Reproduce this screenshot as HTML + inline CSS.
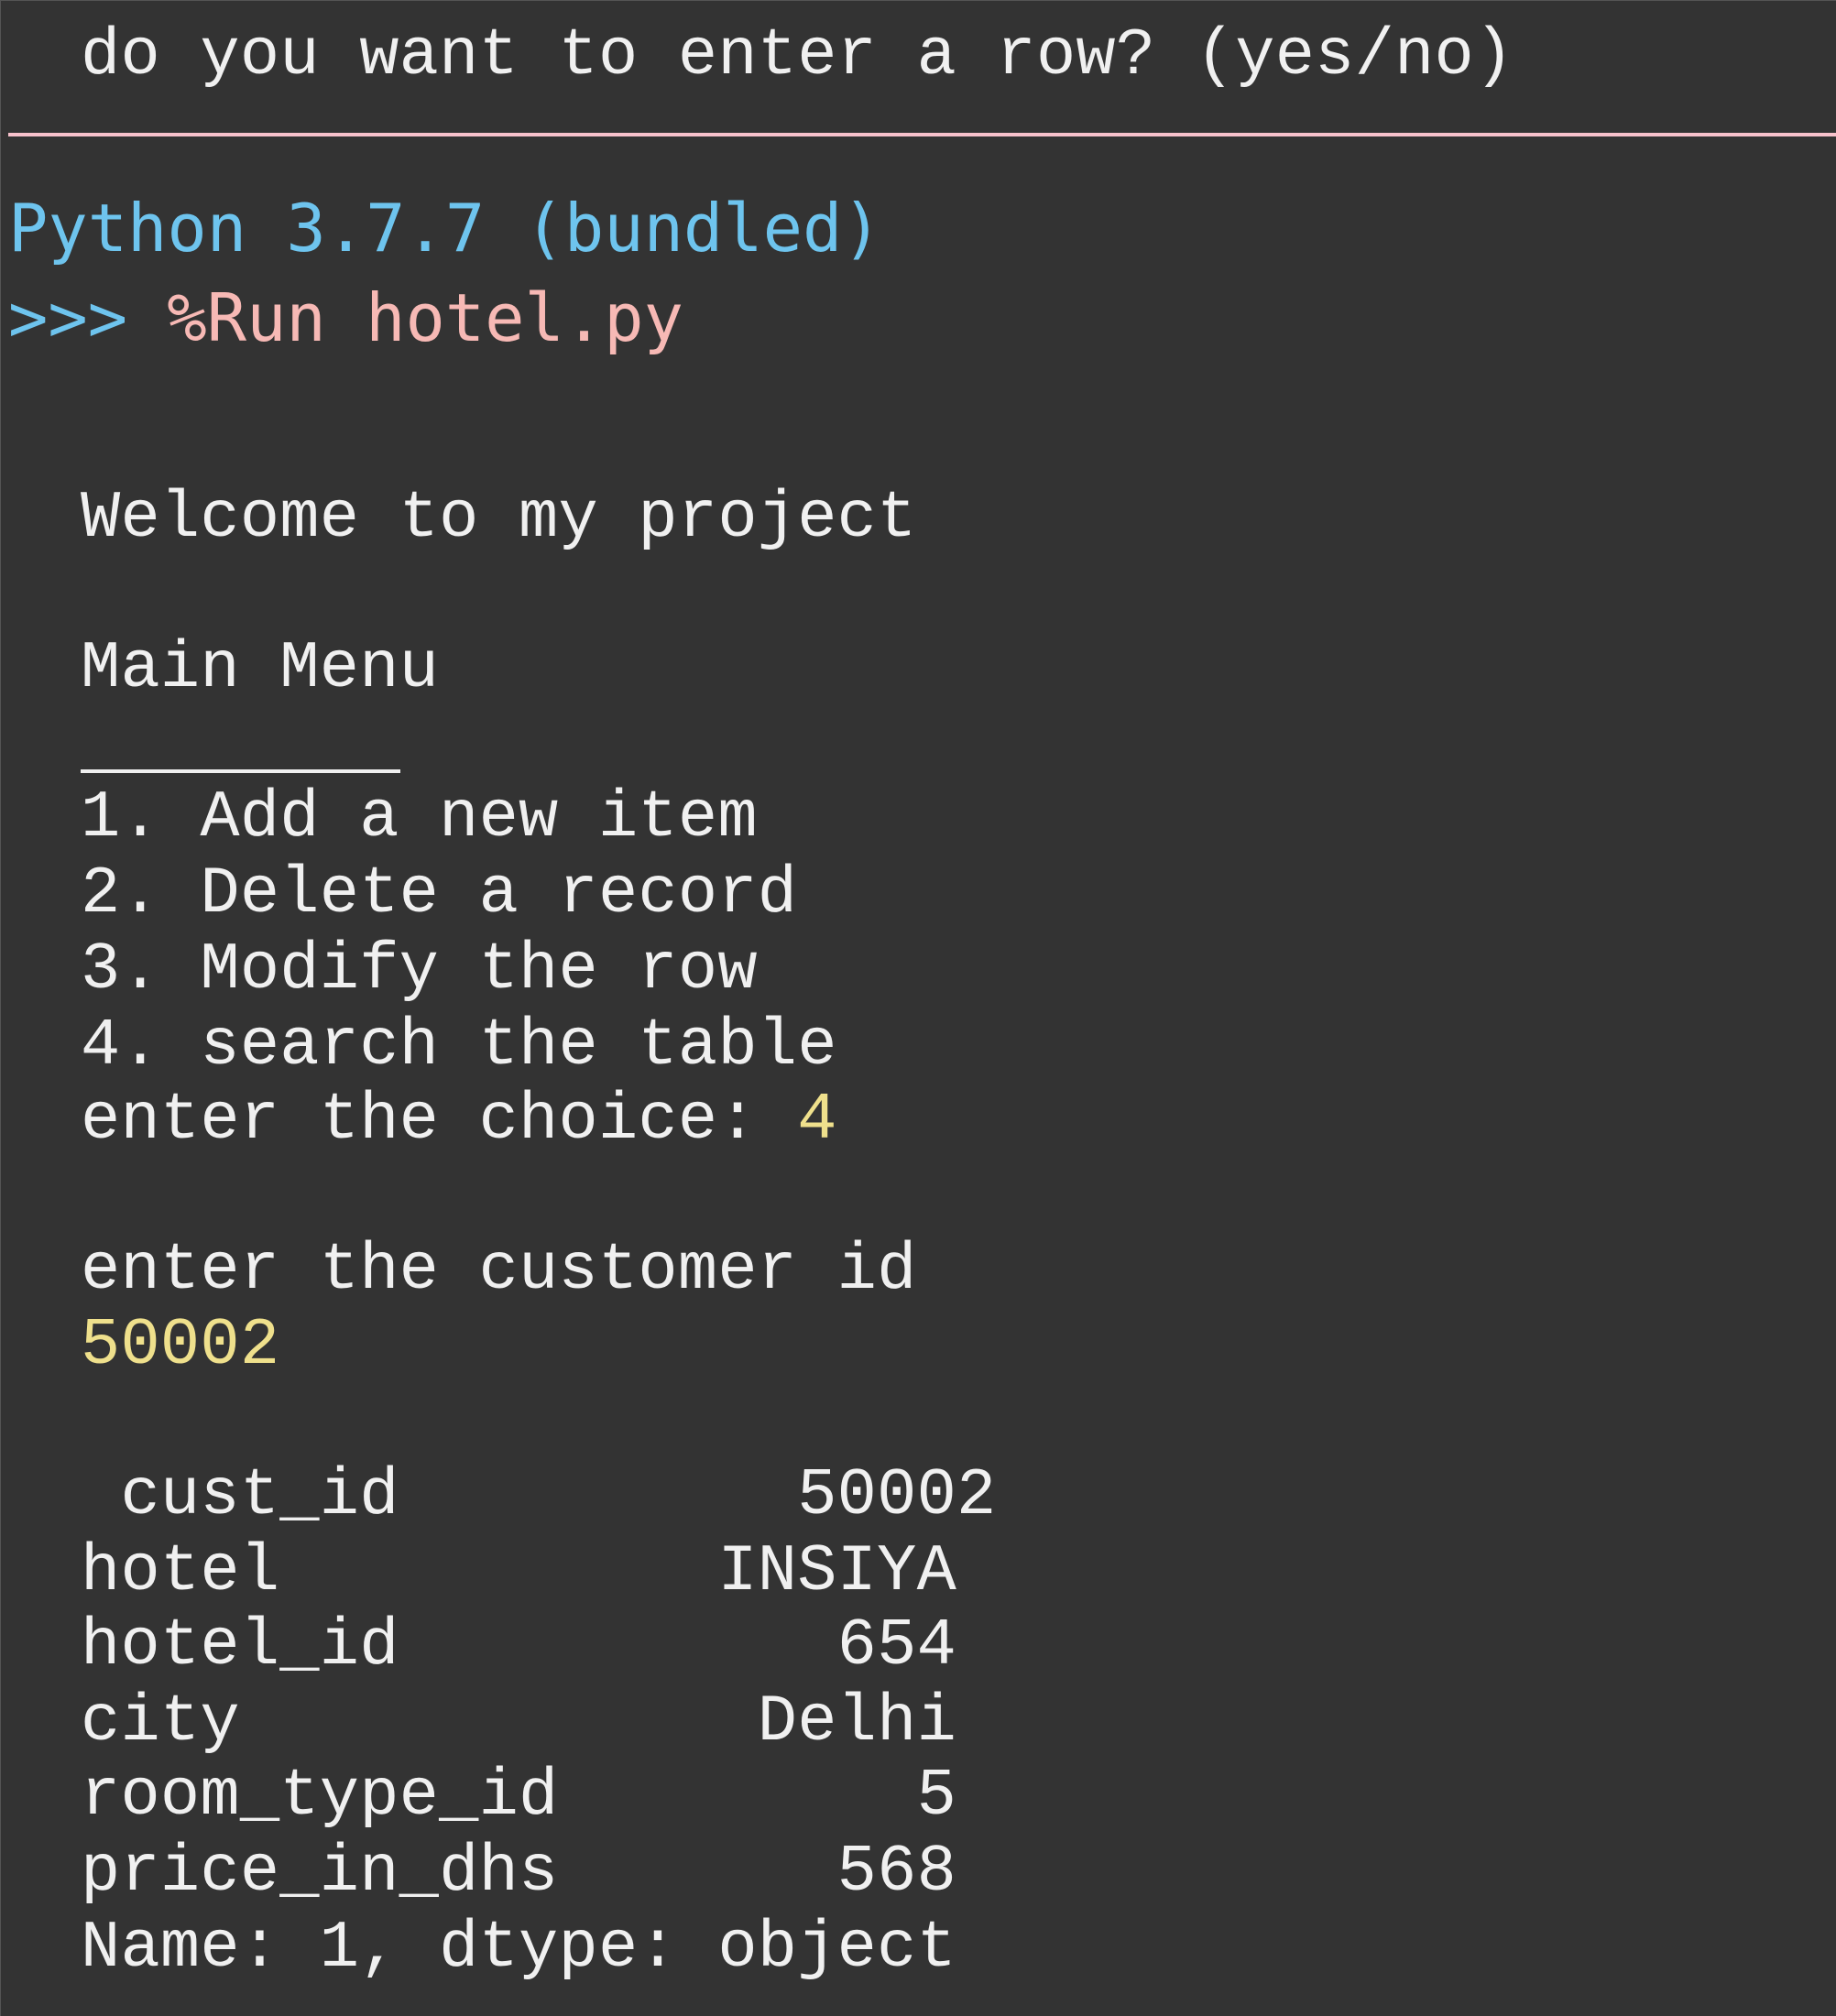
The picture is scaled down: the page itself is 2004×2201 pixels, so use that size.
<!DOCTYPE html>
<html><head><meta charset="utf-8"><style>
html,body{margin:0;padding:0;background:#333333;}
body{width:2004px;height:2201px;position:relative;overflow:hidden;border-left:1px solid #555;border-top:1px solid #555;box-sizing:border-box;}
.l{position:absolute;left:87px;white-space:pre;font-family:"Liberation Mono",monospace;font-size:72px;letter-spacing:0.25px;line-height:82px;height:82px;color:#f0f0f0;}
.p{left:8px;font-family:"DejaVu Sans Mono","Liberation Mono",monospace;color:#6ec4ee;letter-spacing:0;}
.pk{color:#f7b9b5;}
.y{color:#efe08c;}
.hr{position:absolute;left:8px;right:0;top:144px;height:4px;background:#f8c2cc;}
.ul{position:absolute;left:87px;width:349px;top:839px;height:4px;background:#f0f0f0;}
</style></head><body>
<div class="l" style="top:19px">do you want to enter a row? (yes/no)</div>
<div class="hr"></div>
<div class="l p" style="top:207px">Python 3.7.7 (bundled)</div>
<div class="l p" style="top:305px">&gt;&gt;&gt; <span class="pk">%Run hotel.py</span></div>
<div class="l" style="top:524px">Welcome to my project</div>
<div class="l" style="top:688px">Main Menu</div>
<div class="ul"></div>
<div class="l" style="top:851px">1. Add a new item</div>
<div class="l" style="top:934px">2. Delete a record</div>
<div class="l" style="top:1017px">3. Modify the row</div>
<div class="l" style="top:1100px">4. search the table</div>
<div class="l" style="top:1181px">enter the choice: <span class="y">4</span></div>
<div class="l" style="top:1345px">enter the customer id</div>
<div class="l y" style="top:1427px">50002</div>
<div class="l" style="top:1591px"> cust_id          50002</div>
<div class="l" style="top:1674px">hotel           INSIYA</div>
<div class="l" style="top:1755px">hotel_id           654</div>
<div class="l" style="top:1838px">city             Delhi</div>
<div class="l" style="top:1919px">room_type_id         5</div>
<div class="l" style="top:2002px">price_in_dhs       568</div>
<div class="l" style="top:2085px">Name: 1, dtype: object</div>
</body></html>
